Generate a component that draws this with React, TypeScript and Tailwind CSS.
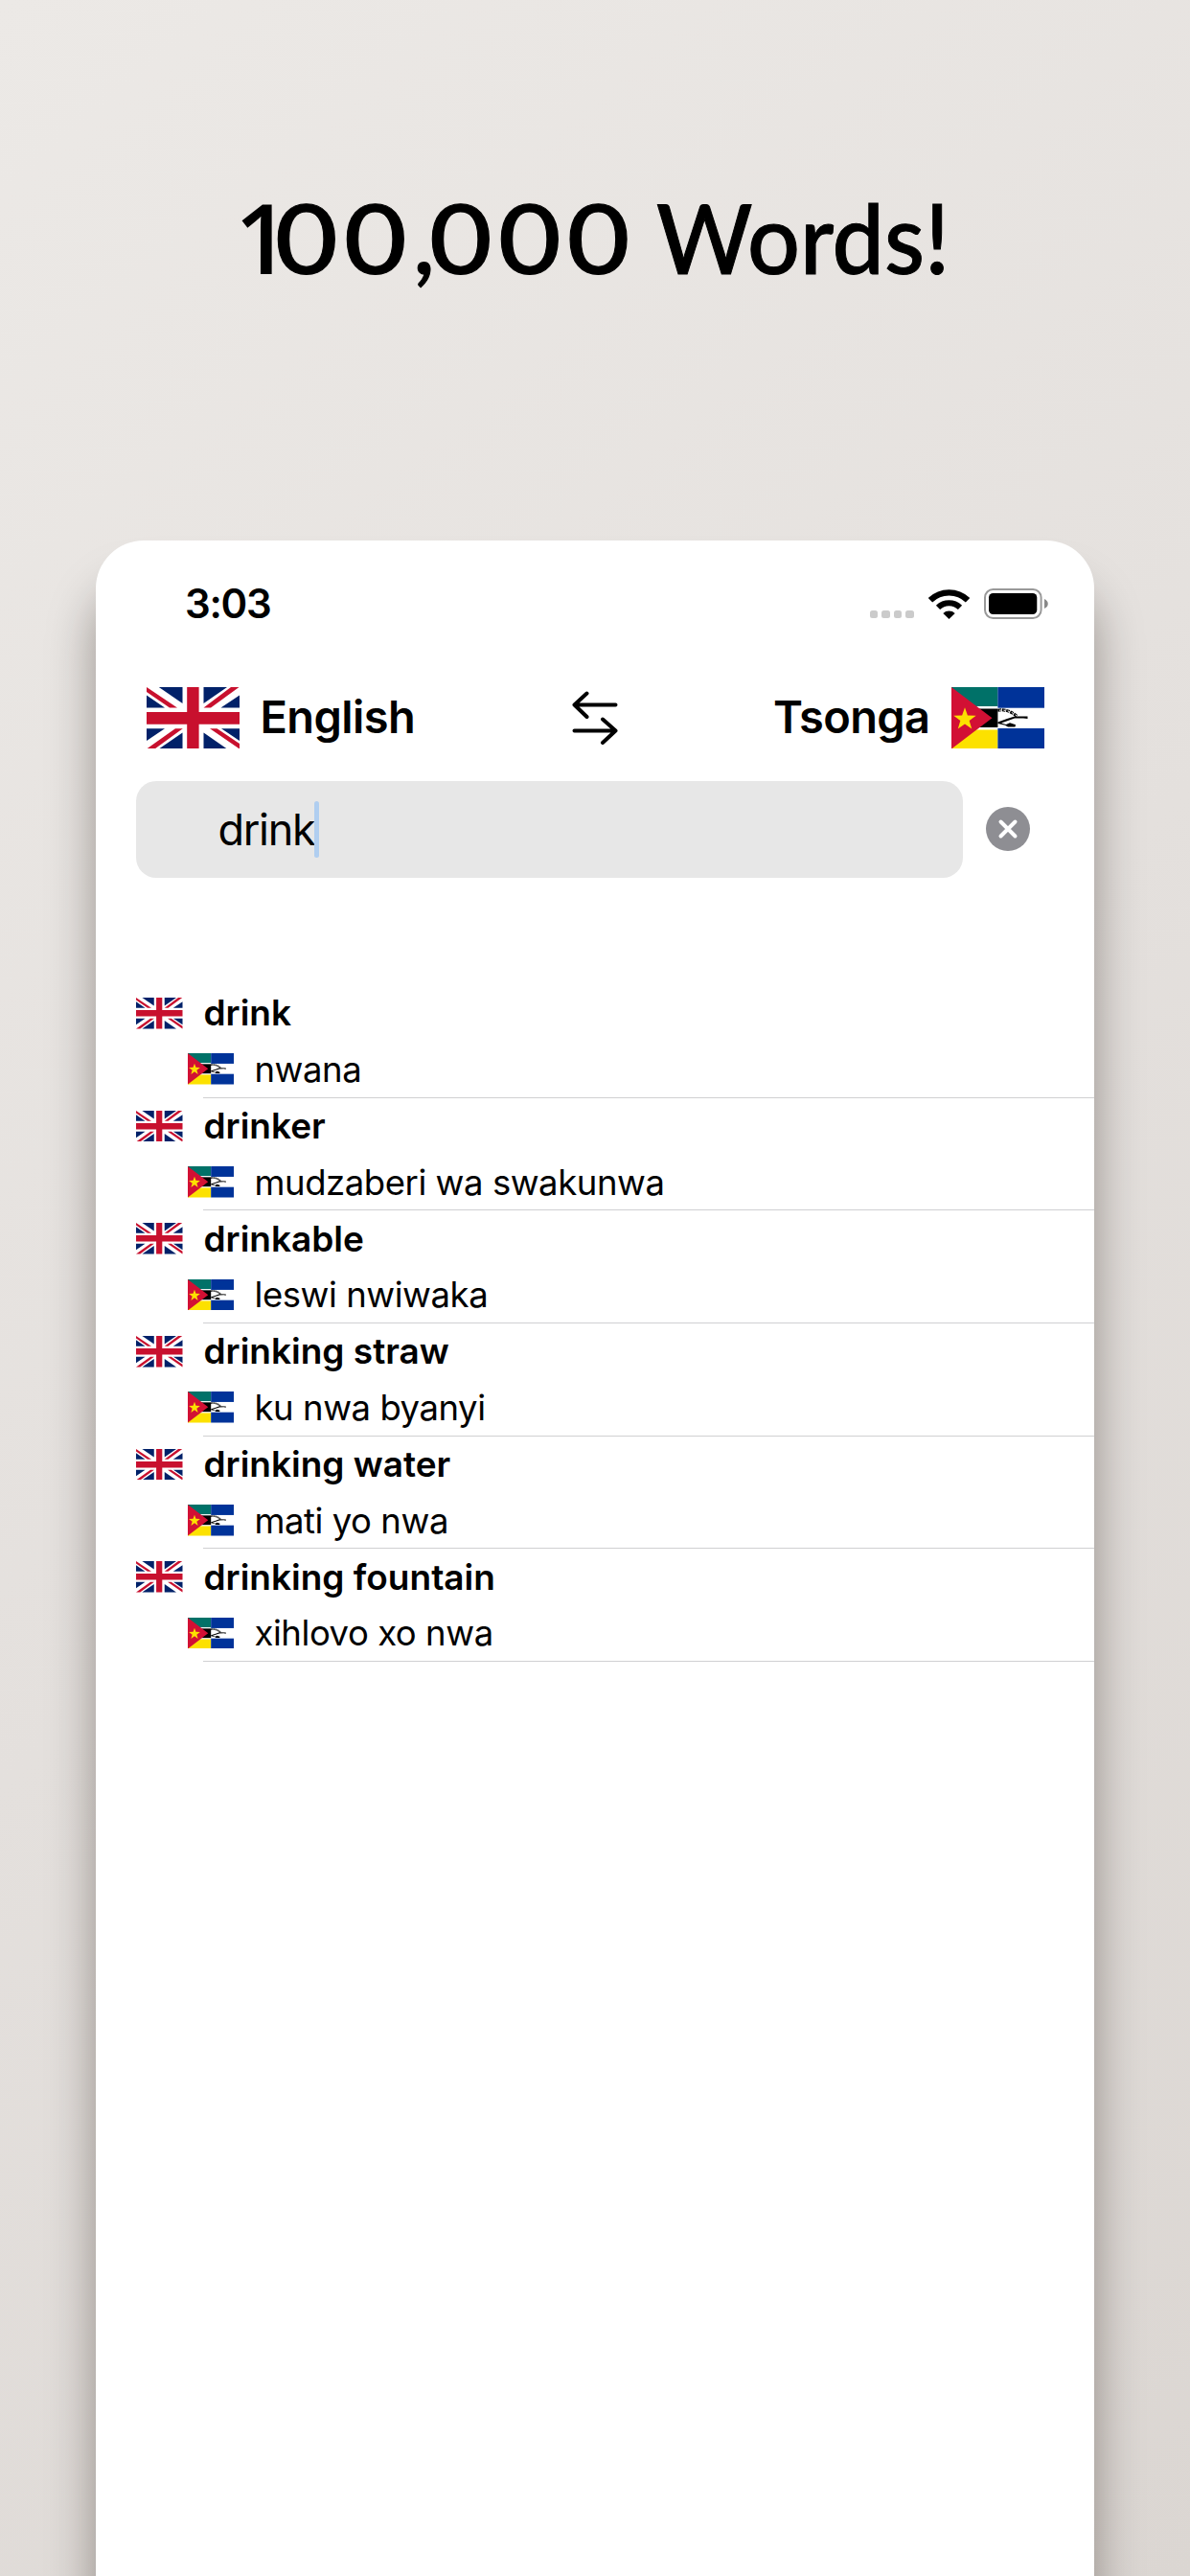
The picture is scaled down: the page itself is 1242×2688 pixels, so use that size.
import React from "react";

const star = (cx: number, cy: number, r: number) =>
  Array.from({ length: 10 }, (_, i) => {
    const a = -Math.PI / 2 + (i * Math.PI) / 5;
    const q = i % 2 ? r * 0.4 : r;
    return `${(cx + q * Math.cos(a)).toFixed(2)},${(cy + q * Math.sin(a)).toFixed(2)}`;
  }).join(" ");

function EnglishFlag({ className }: { className: string }) {
  return (
    <svg viewBox="0 0 97 64.5" preserveAspectRatio="none" className={className}>
      <rect width="97" height="64.5" fill="#fff" />
      <g fill="#012169">
        <path d="M12.8 0H37.5V17Z" />
        <path d="M0 8.5V21.5H19Z" />
        <path d="M59.5 0H84L59.5 17Z" />
        <path d="M97 8.5V21.5H77.5Z" />
        <path d="M0 43.2H19L0 56Z" />
        <path d="M37.5 47.5V64.5H12.8Z" />
        <path d="M59.5 47.5V64.5H84Z" />
        <path d="M78 43.2H97V56Z" />
      </g>
      <g fill="#c8102e">
        <path d="M0 0V5L24 21.5H32Z" />
        <path d="M88 0H96.5L67 21.5H59.5Z" />
        <path d="M30 43.2H37.8L8.5 64.5H0Z" />
        <path d="M66 43.2H73.5L97 59V64.5Z" />
        <path d="M0 26H42.2V0H54.6V26H97V38.8H54.6V64.5H42.2V38.8H0Z" />
      </g>
    </svg>
  );
}

function TsongaFlag({ className }: { className: string }) {
  return (
    <svg viewBox="0 0 97 64.5" preserveAspectRatio="none" className={className}>
      <rect width="97" height="64.5" fill="#fff" />
      <rect width="48.4" height="20" fill="#007168" />
      <rect y="22.5" width="48.4" height="19.5" fill="#000" />
      <rect y="44.5" width="48.4" height="20" fill="#fce100" />
      <path d="M0 0L42.5 32.2L0 64.5Z" fill="#d21034" />
      <polygon points={star(14, 33.5, 12.3)} fill="#fce100" />
      <rect x="48.4" width="48.6" height="21.7" fill="#003399" />
      <rect x="48.4" y="43" width="48.6" height="21.5" fill="#003399" />
      <path d="M48.4 36.4L58 33L66 30.4L79.5 30.6V33L75 32.4L66 32.6L52 37.4L57 39L61 37.2L67 39.2L66.5 41.6L59 41.5L56 39.8L48.4 38Z" fill="#000" />
      <path d="M48.4 24.2C56 22.8 63 25.5 68.5 30.5" fill="none" stroke="#000" strokeWidth="3" strokeDasharray="3.6 0.8" />
      <path d="M50 24.2C57 23.4 63 25.8 68 29.8" fill="none" stroke="#fff" strokeWidth="1" strokeDasharray="2 2.4" />
    </svg>
  );
}

const entries = [
  ["drink", "nwana"],
  ["drinker", "mudzaberi wa swakunwa"],
  ["drinkable", "leswi nwiwaka"],
  ["drinking straw", "ku nwa byanyi"],
  ["drinking water", "mati yo nwa"],
  ["drinking fountain", "xihlovo xo nwa"],
];

export default function App() {
  return (
    <div className="flex h-[2688px] w-[1242px] flex-col items-center overflow-hidden bg-[linear-gradient(140deg,#ece9e6_0%,#e4e0dd_50%,#dbd6d2_100%)] font-[Inter,sans-serif] text-black">
      <header className="flex h-[564px] w-full shrink-0 pl-[245px] pt-[187px]">
        <h1 className="flex h-[120px] whitespace-pre font-[Lato,sans-serif] text-[101px] font-medium leading-[120px] [-webkit-text-stroke:1px_#000]">
          <span className="w-[42px] font-['Open_Sans',sans-serif] font-semibold tracking-[-18px] [-webkit-text-stroke:0px]">1</span>
          <span className="w-[144px] origin-left scale-x-[1.12]">
            <span className="block w-[128px] tracking-[5.6px]">00</span>
          </span>
          <span className="w-[17px] tracking-[-6px]">,</span>
          <span className="w-[216px] origin-left scale-x-[1.12]">
            <span className="block w-[192px] tracking-[5.6px]">000</span>
          </span>
          <span className="w-[21px]"> </span>
          <span className="origin-left scale-x-[0.957]">Words!</span>
        </h1>
      </header>

      <main className="h-[2300px] w-[1042px] shrink-0 rounded-[50px] bg-white shadow-[0_50px_50px_0_rgba(20,10,5,0.38)]">
        <div className="flex h-[132px] items-center justify-between pl-[93px] pr-[48px]">
          <span className="text-[42px] font-semibold leading-none tracking-[-1.3px]">3:03</span>
          <div className="flex items-center">
            <div className="mr-[15px] mt-[22px] flex gap-[4px]">
              {[0, 1, 2, 3].map((i) => (
                <span key={i} className="size-[8.6px] rounded-[2.5px] bg-[#cbcbcb]" />
              ))}
            </div>
            <svg viewBox="0 0 43 32" className="mr-[15px] h-[32px] w-[43px]">
              <path d="M2 12.2A28 28 0 0 1 41 12.2" fill="none" stroke="#000" strokeWidth="6.2" />
              <path d="M10 19.8A16.6 16.6 0 0 1 33 19.8" fill="none" stroke="#000" strokeWidth="6" />
              <path d="M15.3 26A9 9 0 0 1 27.7 26L21.5 32Z" />
            </svg>
            <svg viewBox="0 0 67 32" className="h-[32px] w-[67px]">
              <rect x="1" y="1" width="58.6" height="30" rx="8.5" fill="none" stroke="#999" strokeWidth="2" />
              <rect x="5" y="5" width="50.3" height="22" rx="4.5" />
              <path d="M63 11C68 13 68 19 63 21Z" fill="#888" />
            </svg>
          </div>
        </div>

        <div className="flex h-[106px] items-center pl-[52.5px] pr-[52.5px]">
          <div className="flex flex-1 items-center">
            <EnglishFlag className="h-[64.5px] w-[97px]" />
            <span className="ml-[22px] pb-[3px] text-[47px] font-semibold leading-none tracking-[-0.6px]">English</span>
          </div>
          <svg viewBox="0 0 48 56" className="h-[56px] w-[48px]" fill="none" stroke="#000" strokeWidth="4" strokeLinecap="round" strokeLinejoin="round">
            <path d="M45.5 14.5H2.5M15.5 2.5L2.5 14.5L15.5 27" />
            <path d="M2.5 41.5H45.5M32 29.5L45.5 41.5L32 54" />
          </svg>
          <div className="flex flex-1 items-center justify-end">
            <span className="mr-[22px] pb-[3px] text-[47px] font-semibold leading-none tracking-[-0.6px]">Tsonga</span>
            <TsongaFlag className="h-[64.5px] w-[97px]" />
          </div>
        </div>

        <div className="mt-[12.5px] flex h-[101.5px] items-center pl-[42px]">
          <div className="flex h-full w-[862.5px] items-center rounded-[21px] bg-[#e7e7e7] pl-[85.5px]">
            <span className="pt-[1px] text-[45px] leading-none tracking-[-1.3px]">drink</span>
            <span className="-ml-[0.5px] h-[59px] w-[5px] rounded-full bg-[#b0cef0]" />
          </div>
          <svg viewBox="0 0 46 46" className="ml-[24.5px] size-[46px]">
            <circle cx="23" cy="23" r="23" fill="#8e8e93" />
            <path d="M15.5 15.5L30.5 30.5M30.5 15.5L15.5 30.5" stroke="#fff" strokeWidth="4" strokeLinecap="round" />
          </svg>
        </div>

        <ul className="mt-[112px] pl-[42px]">
          {entries.map(([en, ts]) => (
            <li key={en} className="h-[117.67px]">
              <div className="flex h-[58.8px] items-center">
                <EnglishFlag className="h-[32.5px] w-[48.5px]" />
                <span className="ml-[22px] pb-[1px] text-[37px] font-semibold leading-none">{en}</span>
              </div>
              <div className="flex h-[57.87px] items-center pl-[53.5px]">
                <TsongaFlag className="h-[32.5px] w-[48.5px]" />
                <span className="ml-[21.5px] pt-[1px] text-[36.5px] leading-none tracking-[-0.45px]">{ts}</span>
              </div>
              <div className="ml-[70px] h-px bg-[#d0d0d2]" />
            </li>
          ))}
        </ul>
      </main>
    </div>
  );
}
